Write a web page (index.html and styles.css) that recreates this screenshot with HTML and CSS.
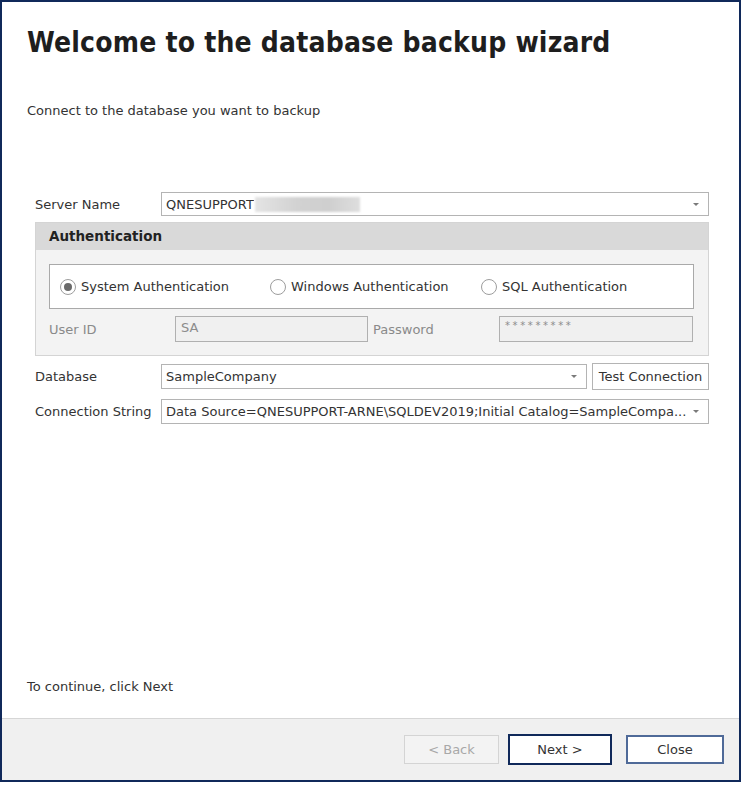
FILE: index.html
```html
<!DOCTYPE html>
<html>
<head>
<meta charset="utf-8">
<link rel="stylesheet" href="styles.css">
</head>
<body>
<div class="window">
  <div class="content">
    <h1 class="title">Welcome to the database backup wizard</h1>
    <p class="subtitle">Connect to the database you want to backup</p>

    <div class="form">
      <div class="row">
        <span class="label">Server Name</span>
        <div class="combo wide">
          <span class="value">QNESUPPORT</span><span class="redacted"></span>
          <span class="arrow"></span>
        </div>
      </div>

      <div class="group">
        <div class="group-head">Authentication</div>
        <div class="group-body">
          <div class="radios">
            <label class="radio r1"><span class="dot checked"></span>System Authentication</label>
            <label class="radio r2"><span class="dot"></span>Windows Authentication</label>
            <label class="radio r3"><span class="dot"></span>SQL Authentication</label>
          </div>
          <div class="creds">
            <span class="label dim uid">User ID</span>
            <div class="field dis uidbox">SA</div>
            <span class="label dim pwd">Password</span>
            <div class="field dis pwdbox">*********</div>
          </div>
        </div>
      </div>

      <div class="row db">
        <span class="label">Database</span>
        <div class="combo dbbox">
          <span class="value">SampleCompany</span>
          <span class="arrow"></span>
        </div>
        <button class="test">Test Connection</button>
      </div>

      <div class="row cs">
        <span class="label">Connection String</span>
        <div class="combo wide">
          <span class="value">Data Source=QNESUPPORT-ARNE\SQLDEV2019;Initial Catalog=SampleCompa...</span>
          <span class="arrow"></span>
        </div>
      </div>
    </div>

    <p class="hint">To continue, click Next</p>
  </div>
  <div class="footer">
    <button class="btn back">&lt; Back</button>
    <button class="btn next">Next &gt;</button>
    <button class="btn close">Close</button>
  </div>
</div>
</body>
</html>
```

FILE: styles.css
```css
html, body {
  margin: 0;
  padding: 0;
  background: #ffffff;
}
body {
  font-family: "DejaVu Sans", sans-serif;
  color: #2b2b2b;
}
.window {
  box-sizing: border-box;
  width: 741px;
  height: 782px;
  border: 2px solid #10295a;
  display: flex;
  flex-direction: column;
  background: #ffffff;
}
.content {
  flex: 1;
  display: flex;
  flex-direction: column;
  padding: 0 0 0 25px;
}
.title {
  margin: 25px 0 0 0;
  font-family: "DejaVu Sans Condensed", "DejaVu Sans", sans-serif;
  font-weight: bold;
  font-size: 28px;
  line-height: 32px;
  color: #1e1e1e;
  letter-spacing: 0.2px;
}
.subtitle {
  margin: 44px 0 0 0;
  font-size: 13px;
  line-height: 16px;
  color: #333333;
}
.form {
  margin: 73px 0 0 8px;
  width: 674px;
  display: flex;
  flex-direction: column;
}
.row {
  display: flex;
  align-items: center;
  height: 24px;
}
.label {
  font-size: 13px;
  color: #333333;
  width: 126px;
  flex: none;
}
.label.dim {
  color: #8a8a8a;
}
.combo {
  position: relative;
  box-sizing: border-box;
  height: 24px;
  border: 1px solid #b4b4b4;
  background: #ffffff;
  display: flex;
  align-items: center;
  padding-left: 4px;
  font-size: 13px;
  color: #333333;
}
.combo.wide {
  flex: 1;
}
.value {
  white-space: nowrap;
  overflow: hidden;
}
.redacted {
  width: 105px;
  height: 15px;
  margin-left: 1px;
  background: linear-gradient(90deg, #e4e4e4, #d2d2d2 40%, #cfcfcf 70%, #dedede);
  filter: blur(1.2px);
}
.arrow {
  position: absolute;
  right: 9px;
  top: 10px;
  width: 0;
  height: 0;
  border-left: 3px solid transparent;
  border-right: 3px solid transparent;
  border-top: 3px solid #7a7a7a;
}
.group {
  margin-top: 6px;
  border: 1px solid #d4d4d4;
  background: #f3f3f3;
}
.group-head {
  height: 27px;
  line-height: 27px;
  background: #d9d9d9;
  font-weight: bold;
  font-size: 13.5px;
  color: #222222;
  padding-left: 13px;
}
.group-body {
  padding: 14px 14px 13px 13px;
}
.radios {
  box-sizing: border-box;
  height: 45px;
  border: 1px solid #a9a9a9;
  background: #ffffff;
  display: flex;
  align-items: center;
  padding-left: 10px;
}
.radio {
  display: flex;
  align-items: center;
  font-size: 13px;
  color: #333333;
}
.r1 { width: 210px; }
.r2 { width: 211px; }
.dot {
  box-sizing: border-box;
  width: 16px;
  height: 16px;
  border-radius: 50%;
  border: 1px solid #9d9d9d;
  background: #ffffff;
  margin-right: 5px;
  display: flex;
  align-items: center;
  justify-content: center;
}
.dot.checked::after {
  content: "";
  width: 8px;
  height: 8px;
  border-radius: 50%;
  background: #6a6a6a;
}
.creds {
  display: flex;
  align-items: center;
  margin-top: 7px;
  height: 26px;
}
.uid { width: 126px; }
.pwd { width: 126px; margin-left: 5px; }
.field {
  box-sizing: border-box;
  height: 26px;
  border: 1px solid #b0b0b0;
  padding: 3px 5px;
  font-size: 13px;
}
.field.dis {
  background: #f0f0f0;
  color: #8c8c8c;
}
.uidbox { width: 193px; }
.pwdbox { width: 194px; font-size: 10px; letter-spacing: 2.6px; padding-top: 3px; }
.db {
  margin-top: 7px;
  height: 27px;
}
.dbbox {
  width: 426px;
  height: 25px;
}
.test {
  box-sizing: border-box;
  margin-left: 5px;
  width: 117px;
  height: 27px;
  border: 1px solid #b4b4b4;
  background: #ffffff;
  font-family: "DejaVu Sans", sans-serif;
  font-size: 13px;
  color: #333333;
  padding: 0;
}
.cs {
  margin-top: 9px;
  height: 25px;
}
.cs .combo { height: 25px; }
.hint {
  margin: auto 0 23px 0;
  font-size: 13px;
  line-height: 16px;
  color: #333333;
}
.footer {
  height: 61px;
  flex: none;
  background: #f0f0f0;
  border-top: 1px solid #d6d6d6;
  display: flex;
  align-items: center;
  justify-content: flex-end;
  padding-right: 15px;
  gap: 9px;
}
.btn {
  box-sizing: border-box;
  height: 29px;
  font-family: "DejaVu Sans", sans-serif;
  font-size: 13px;
  padding: 0;
  background: #ffffff;
  color: #333333;
}
.back {
  width: 95px;
  border: 1px solid #d4d4d4;
  background: #f3f3f3;
  color: #a8a8a8;
}
.next {
  width: 104px;
  height: 31px;
  border: 2px solid #10295a;
}
.close {
  width: 98px;
  border: 2px solid #4f6a98;
  margin-left: 5px;
}
```
